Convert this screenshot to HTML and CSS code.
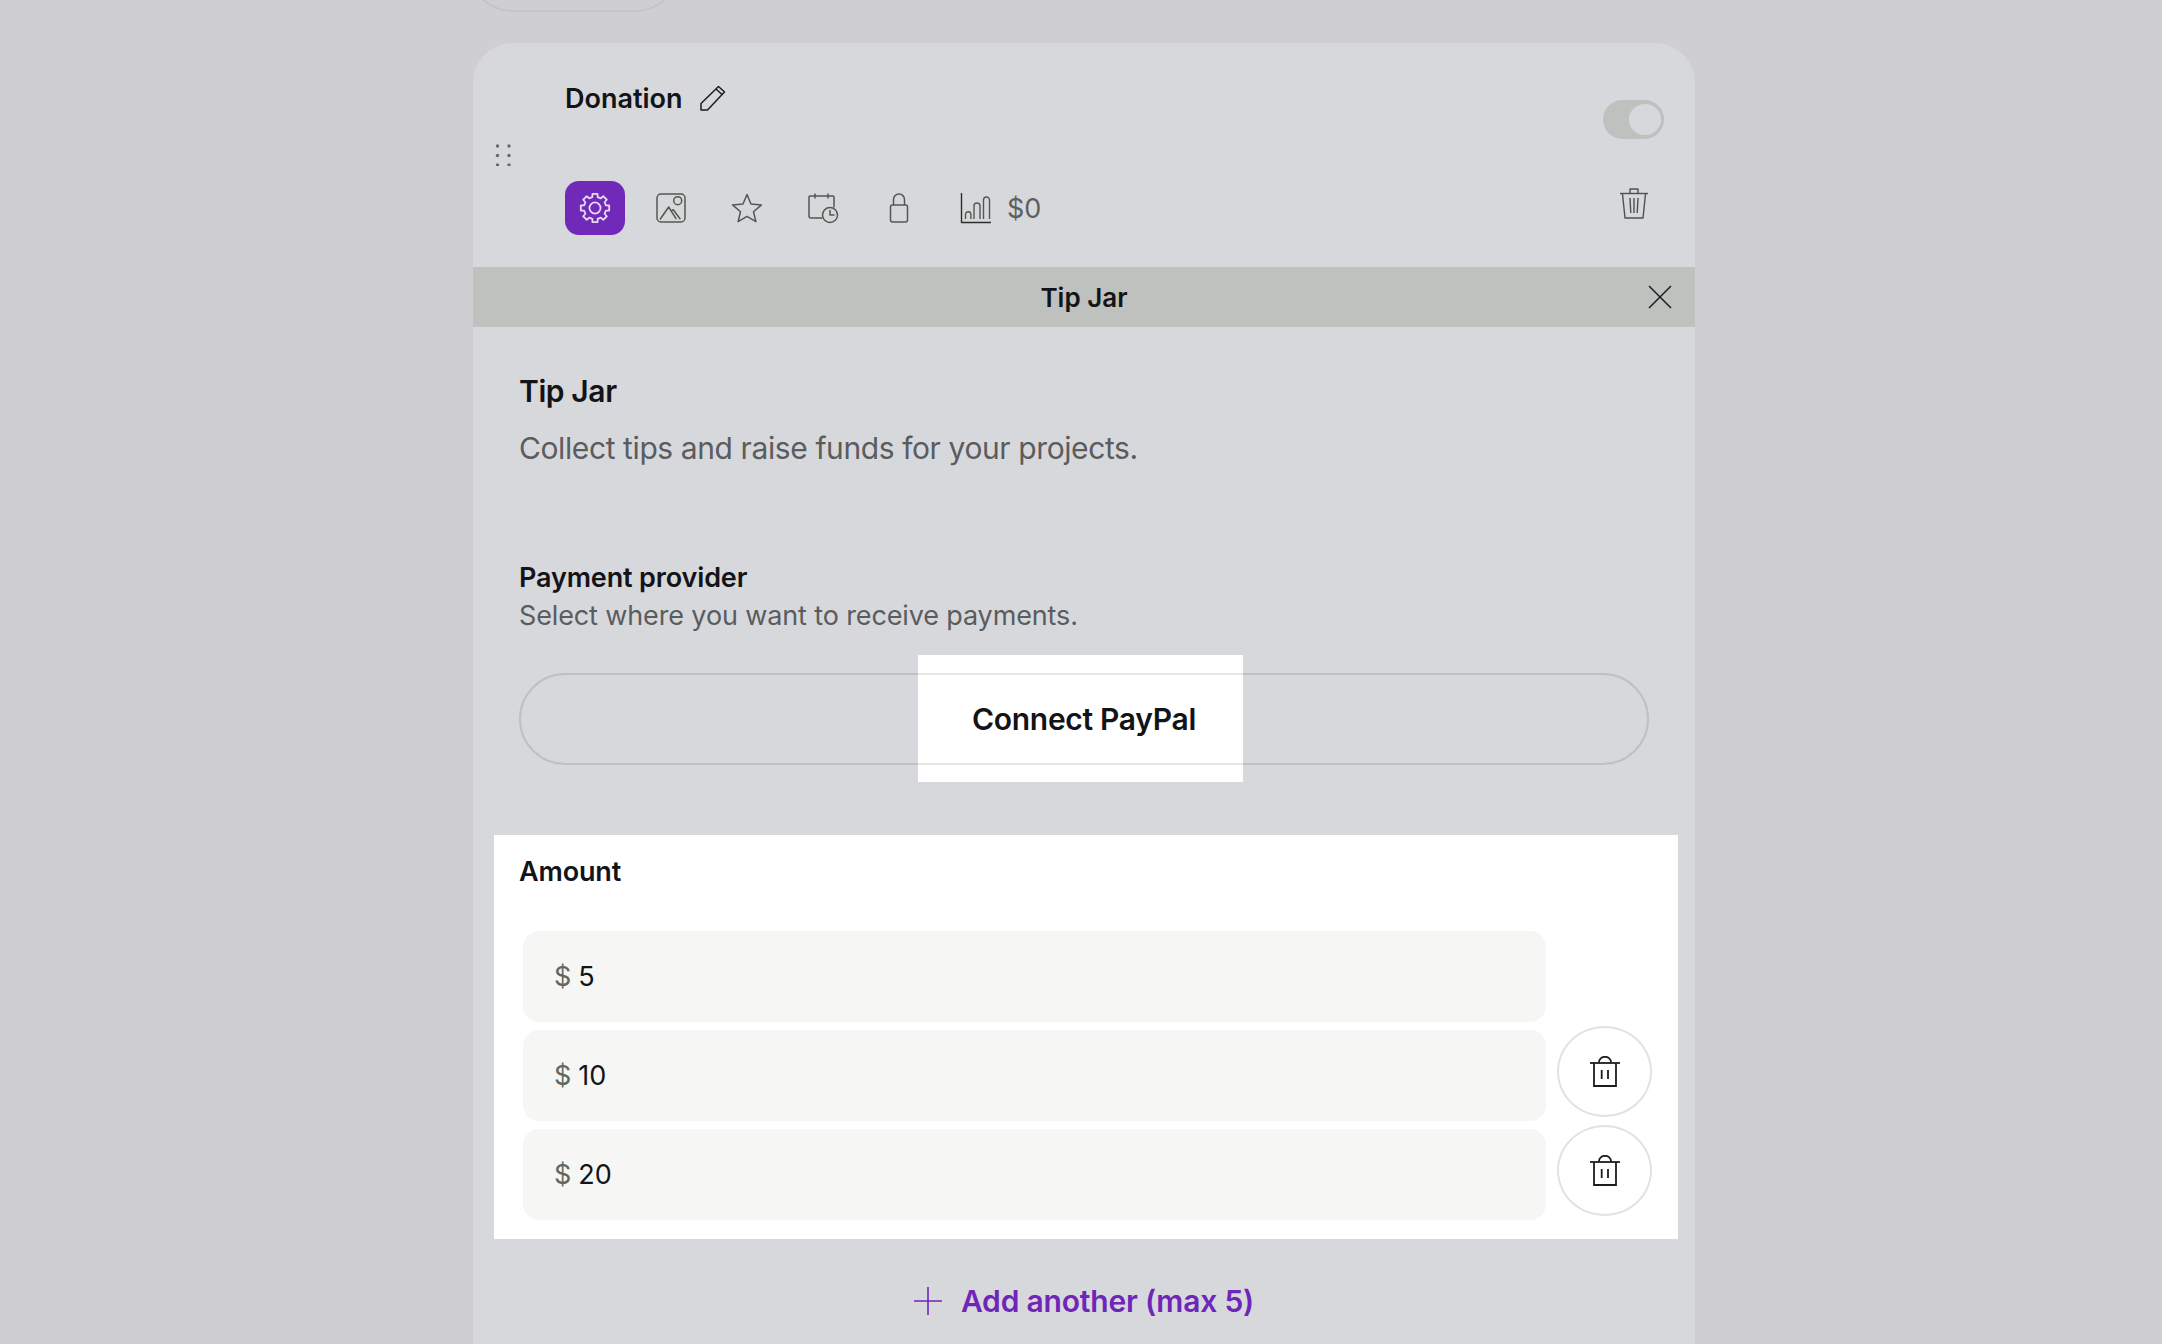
FILE: index.html
```html
<!DOCTYPE html>
<html lang="en">
<head>
    <meta charset="UTF-8">
    <meta name="viewport" content="width=device-width, initial-scale=1.0">
    <title>Tip Jar</title>
    <link rel="stylesheet" href="styles.css">
</head>
<body>
    <div class="column">
        <div class="prev-button"></div>

        <div class="card">
            <div class="card-header">
                <svg class="handle" width="18" height="22" viewBox="0 0 18 22">
                    <g fill="#66686a">
                        <circle cx="3.5" cy="2" r="1.7"/><circle cx="15" cy="2" r="1.7"/>
                        <circle cx="3.5" cy="11.5" r="1.7"/><circle cx="15" cy="11.5" r="1.7"/>
                        <circle cx="3.5" cy="21" r="1.7"/><circle cx="15" cy="21" r="1.7"/>
                    </g>
                </svg>

                <div class="header-main">
                    <div class="title-row">
                        <span class="title">Donation</span>
                        <svg class="edit" width="28" height="28" viewBox="0 0 28 28" fill="none" stroke="#1c1d1f" stroke-width="1.5" stroke-linejoin="round">
                            <path d="M2 19.5 19.5 2.5l6 5.5L8.5 26H2z"/>
                            <path d="M17 5l6 5.5"/>
                        </svg>
                    </div>
                    <div class="tools">
                        <button class="tool active">
                            <svg width="32" height="32" viewBox="0 0 30 30" fill="none" stroke="#e6daf3" stroke-width="1.7" stroke-linejoin="round">
                                <polygon points="12.66,1.7 17.34,1.7 17.54,4.81 20.41,6 22.74,3.94 26.06,7.26 24,9.59 25.19,12.46 28.3,12.66 28.3,17.34 25.19,17.54 24,20.41 26.06,22.74 22.74,26.06 20.41,24 17.54,25.19 17.34,28.3 12.66,28.3 12.46,25.19 9.59,24 7.26,26.06 3.94,22.74 6,20.41 4.81,17.54 1.7,17.34 1.7,12.66 4.81,12.46 6,9.59 3.94,7.26 7.26,3.94 9.59,6 12.46,4.81"/>
                                <circle cx="15" cy="15" r="5.2"/>
                            </svg>
                        </button>
                        <button class="tool">
                            <svg width="30" height="30" viewBox="0 0 30 30" fill="none" stroke="#55574f" stroke-width="1.5" stroke-linejoin="round" stroke-linecap="round">
                                <rect x="1" y="1" width="28" height="28" rx="4"/>
                                <circle cx="21.7" cy="7.7" r="4"/>
                                <path d="M4.300 26 12.700 14l7.300 11.700M15.500 18l1.800-1.300L24 25.700"/>
                            </svg>
                        </button>
                        <button class="tool">
                            <svg width="32" height="30" viewBox="0 0 32 30" fill="none" stroke="#55574f" stroke-width="1.5" stroke-linejoin="round">
                                <path d="M16 1.5l4 9.5 10.5.9-8 6.8 2.4 10-8.900-5.300-8.900 5.300 2.400-10-8-6.800L12 11z"/>
                            </svg>
                        </button>
                        <button class="tool">
                            <svg width="32" height="31" viewBox="-1 0 32 31" fill="none" stroke="#55574f" stroke-width="1.5" stroke-linecap="round" stroke-linejoin="round">
                                <path d="M14 25H3a2 2 0 0 1-2-2V4a1 1 0 0 1 1-1h23a1 1 0 0 1 1 1v10"/>
                                <path d="M7 1v4M20 1v4"/>
                                <circle cx="22" cy="22" r="7.500"/>
                                <path d="M22 17.500V22h4"/>
                            </svg>
                        </button>
                        <button class="tool">
                            <svg width="20" height="30" viewBox="-1 0 20 30" fill="none" stroke="#55574f" stroke-width="1.500" stroke-linejoin="round">
                                <rect x="0.500" y="12" width="17" height="17" rx="2"/>
                                <path d="M3.500 12V6.500a5.500 5.500 0 0 1 11 0V12"/>
                            </svg>
                        </button>
                        <div class="stat">
                            <svg width="32" height="32" viewBox="0 0 32 32" fill="none" stroke="#55574f" stroke-width="1.400" stroke-linejoin="round">
                                <path d="M1.500 1v29.500H31" stroke="#2b2d2a"/>
                                <path d="M5.500 27v-4.500a2.700 2.700 0 0 1 5.400 0V27M14 27V14a3 3 0 0 1 6 0v13M23.500 27V8a3 3 0 0 1 6 0v19"/>
                            </svg>
                            <span>$0</span>
                        </div>
                    </div>
                </div>

                <div class="header-side">
                    <div class="toggle"><span class="knob"></span></div>
                    <svg class="side-trash" width="30" height="31" viewBox="0 0 30 31" fill="none" stroke="#4d4f50" stroke-width="1.400" stroke-linejoin="round">
                        <path d="M1 5.500h28"/>
                        <path d="M11 5V1h8v4"/>
                        <path d="M3.500 6l2.500 24h18l2.500-24"/>
                        <path d="M11 10l.8 15M15 10v15M19 10l-.8 15"/>
                    </svg>
                </div>
            </div>

            <div class="panel-bar">
                <span>Tip Jar</span>
                <svg class="close" width="24" height="24" viewBox="0 0 24 24" stroke="#1c1d1f" stroke-width="1.500">
                    <path d="M1 1l22 22M23 1 1 23"/>
                </svg>
            </div>

            <div class="panel-body">
                <h2>Tip Jar</h2>
                <p class="desc">Collect tips and raise funds for your projects.</p>

                <h3>Payment provider</h3>
                <p class="sub">Select where you want to receive payments.</p>

                <button class="connect"><span>Connect PayPal</span></button>
            </div>

            <div class="amount">
                <h3>Amount</h3>
                <div class="amount-rows">
                    <div class="amount-row">
                        <div class="field"><span class="currency">$</span>5</div>
                    </div>
                    <div class="amount-row">
                        <div class="field"><span class="currency">$</span>10</div>
                        <button class="remove">
                            <svg width="32" height="31" viewBox="0 0 32 31" fill="none" stroke="#1c1d1f" stroke-width="1.800">
                                <path d="M1 7h30"/>
                                <path d="M10 7V6a6 5.200 0 0 1 12 0v1"/>
                                <path d="M5 7v23h22V7"/>
                                <path d="M12.700 14v9M19 14v9"/>
                            </svg>
                        </button>
                    </div>
                    <div class="amount-row">
                        <div class="field"><span class="currency">$</span>20</div>
                        <button class="remove">
                            <svg width="32" height="31" viewBox="0 0 32 31" fill="none" stroke="#1c1d1f" stroke-width="1.800">
                                <path d="M1 7h30"/>
                                <path d="M10 7V6a6 5.200 0 0 1 12 0v1"/>
                                <path d="M5 7v23h22V7"/>
                                <path d="M12.700 14v9M19 14v9"/>
                            </svg>
                        </button>
                    </div>
                </div>
            </div>

            <div class="add-another">
                <svg width="28" height="28" viewBox="0 0 28 28" stroke="#6f26b8" stroke-width="1.600">
                    <path d="M14 0v28M0 14h28"/>
                </svg>
                <span>Add another (max 5)</span>
            </div>
        </div>
    </div>
</body>
</html>
```

FILE: styles.css
```css
* {
    margin: 0;
    padding: 0;
    box-sizing: border-box;
    font-family: Inter, "Liberation Sans", sans-serif;
}

body {
    height: 1344px;
    overflow: hidden;
    background: #cfcfd1;
    color: #131417;
}

button {
    background: none;
    border: none;
    color: inherit;
}

.column {
    width: 1222px;
    margin-left: 473px;
}

/* only the bottom of this pill is on screen */
.prev-button {
    width: 214px;
    height: 93px;
    margin-top: -81px;
    margin-left: -6px;
    border: 2px solid #c4c5c5;
    border-radius: 46px;
}

.card {
    margin-top: 31px;
    height: 1400px;
    background: #d7d8dc;
    border-radius: 40px 40px 0 0;
}

/* header */
.card-header {
    display: flex;
    align-items: center;
    height: 224px;
    padding-left: 21px;
    padding-right: 31px;
}

.handle {
    flex-shrink: 0;
}

.header-main {
    align-self: flex-start;
    flex: 1;
    padding-left: 53px;
    padding-top: 38px;
}

.title-row {
    display: flex;
    align-items: center;
    gap: 16px;
    height: 34px;
}

.title {
    font-size: 27px;
    font-weight: 600;
}

.tools {
    display: flex;
    align-items: center;
    margin-top: 66px;
}

.tool {
    display: flex;
    align-items: center;
    justify-content: center;
    width: 60px;
    height: 54px;
    margin-right: 16px;
    border-radius: 14px;
}

.tool.active {
    background: #7029b8;
}

.stat {
    display: flex;
    align-items: center;
    gap: 15px;
    margin-left: 15px;
    font-size: 27px;
    color: #5d5f60;
}

.header-side {
    align-self: flex-start;
    display: flex;
    flex-direction: column;
    align-items: center;
    padding-top: 57px;
}

.toggle {
    display: flex;
    justify-content: flex-end;
    align-items: center;
    width: 61px;
    height: 39px;
    padding-right: 3px;
    background: #bec1bd;
    border-radius: 20px;
}

.knob {
    width: 32px;
    height: 31px;
    background: #d7d8dc;
    border-radius: 50%;
}

.side-trash {
    margin-top: 49px;
}

/* tip jar panel */
.panel-bar {
    position: relative;
    display: flex;
    justify-content: center;
    align-items: center;
    height: 60px;
    background: #bec1bd;
    font-size: 26px;
    font-weight: 600;
}

.close {
    position: absolute;
    right: 23px;
    top: 18px;
}

.panel-body {
    padding: 46px 46px 0;
}

h2 {
    font-size: 30px;
    line-height: 36px;
    font-weight: 600;
    letter-spacing: -0.4px;
}

.desc {
    margin-top: 21px;
    font-size: 30px;
    line-height: 36px;
    letter-spacing: -0.4px;
    color: #5a5c5e;
}

h3 {
    font-size: 27px;
    line-height: 34px;
    font-weight: 600;
    letter-spacing: -0.15px;
}

.panel-body h3 {
    margin-top: 95px;
}

.sub {
    margin-top: 4px;
    font-size: 27px;
    line-height: 34px;
    letter-spacing: -0.13px;
    color: #5a5c5e;
}

.connect {
    position: relative;
    display: flex;
    justify-content: center;
    align-items: center;
    width: 100%;
    height: 92px;
    margin-top: 40px;
    border: 2px solid #bec1bd;
    border-radius: 46px;
    font-size: 30px;
    font-weight: 600;
    letter-spacing: -0.3px;
}

.connect span {
    position: relative;
}

/* spotlight cut out over the button */
.connect::before {
    content: "";
    position: absolute;
    left: 397px;
    top: -20px;
    width: 325px;
    height: 127px;
    background:
        linear-gradient(#e6e6df, #e6e6df) 0 18px / 100% 2px no-repeat,
        linear-gradient(#e6e6df, #e6e6df) 0 108px / 100% 2px no-repeat,
        #fff;
}

.amount {
    height: 404px;
    margin: 70px 17px 0 21px;
    padding: 20px 26px 0 29px;
    background: #fff;
}

.amount h3 {
    margin-left: -4px;
}

.amount-rows {
    display: flex;
    flex-direction: column;
    gap: 8px;
    margin-top: 42px;
}

.amount-row {
    display: flex;
    align-items: flex-start;
    gap: 11px;
}

.field {
    display: flex;
    align-items: center;
    width: 1023px;
    height: 91px;
    padding-left: 31px;
    background: #f6f6f5;
    border-radius: 16px;
    font-size: 27px;
}

.currency {
    margin-right: 7px;
    color: #63685f;
}

.remove {
    display: flex;
    justify-content: center;
    align-items: center;
    width: 95px;
    height: 91px;
    margin-top: -4px;
    border: 2px solid #e3e3dd;
    border-radius: 50%;
}

.add-another {
    display: flex;
    justify-content: center;
    align-items: center;
    gap: 19px;
    margin-top: 44px;
    font-size: 30px;
    line-height: 36px;
    font-weight: 600;
    letter-spacing: -0.2px;
    color: #6f26b8;
}
```
